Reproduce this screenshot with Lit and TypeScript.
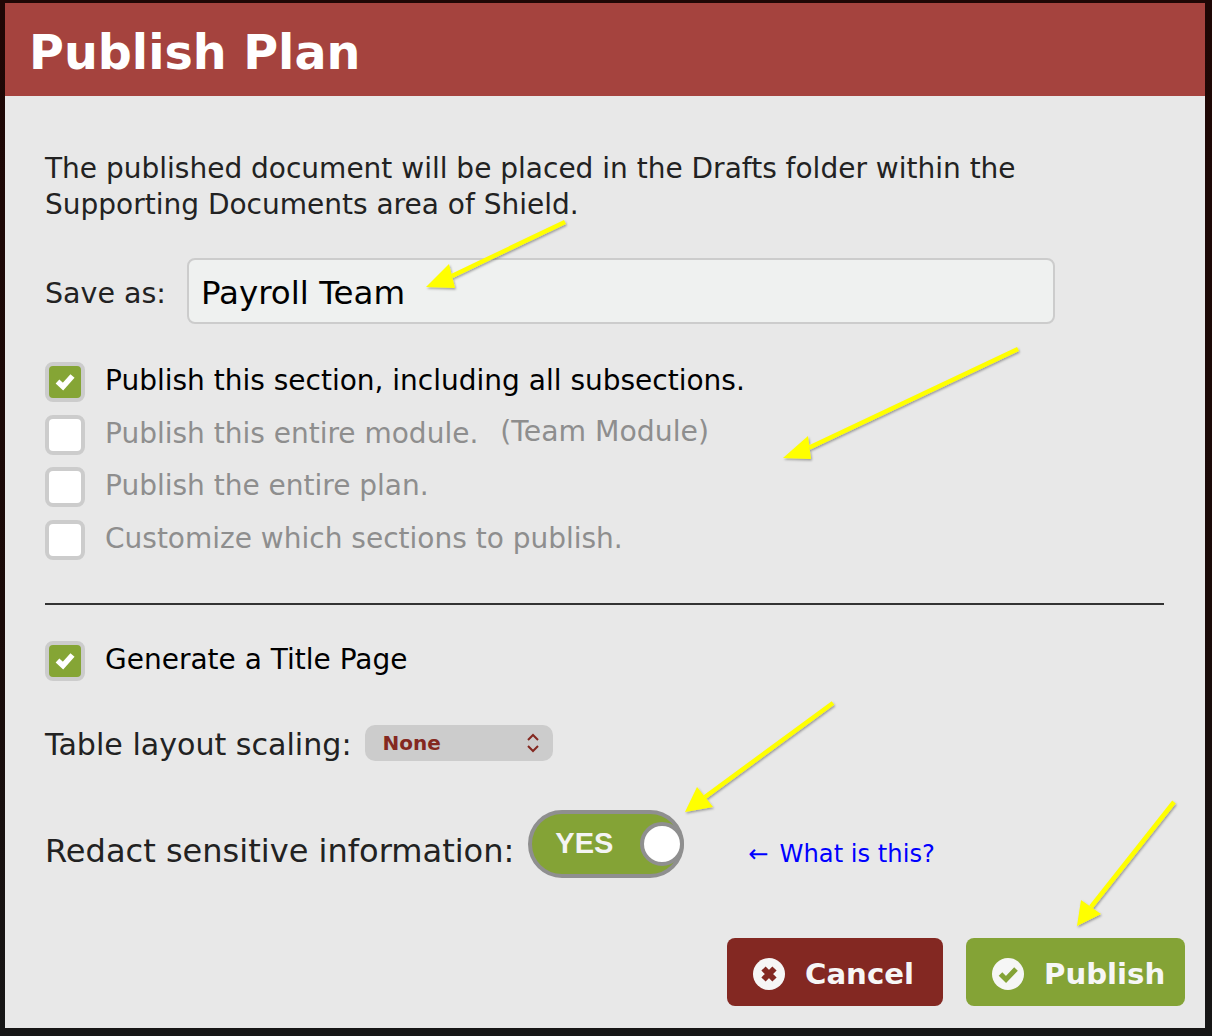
import { LitElement, html, css, svg } from "lit";
import { customElement } from "lit/decorators.js";

const check = html`<svg class="tick" viewBox="0 0 24 24" width="24" height="24"><path d="M4.5 11.5 L10 16.5 L19.5 6" fill="none" stroke="#fff" stroke-width="5.5"/></svg>`;

const arrow = (x1: number, y1: number, tx: number, ty: number, ax: number, ay: number, bx: number, by: number) => svg`
  <g filter="url(#sh)">
    <line x1=${x1} y1=${y1} x2=${(ax + bx) / 2} y2=${(ay + by) / 2} stroke="#ffff00" stroke-width="4.5"/>
    <polygon points="${tx},${ty} ${ax},${ay} ${bx},${by}" fill="#ffff00"/>
  </g>`;

@customElement("app-root")
export class AppRoot extends LitElement {
  static styles = css`
    :host {
      display: block;
      position: relative;
      width: 1212px;
      height: 1036px;
      overflow: hidden;
      background: linear-gradient(#1f0705 0, #1a0a08 60%, #161616 100%);
      font-family: "DejaVu Sans", Verdana, sans-serif;
      color: #222;
    }
    .dialog {
      margin: 3px 7px 0 5px;
      height: 1025px;
      background: #e8e8e8;
      display: flex;
      flex-direction: column;
    }
    .head {
      height: 93px;
      background: #a5433e;
      color: #fff;
      font-weight: 700;
      font-size: 47.6px;
      line-height: 100px;
      padding-left: 24px;
      box-sizing: border-box;
    }
    .body {
      padding: 55px 20px 0 40px;
      display: flex;
      flex-direction: column;
    }
    .intro {
      margin: 0;
      font-size: 28px;
      line-height: 36px;
      color: #222;
    }
    .save {
      display: flex;
      align-items: center;
      gap: 21px;
      margin-top: 35px;
      font-size: 28.5px;
    }
    .save span { margin-top: 4px; }
    .field {
      width: 868px;
      height: 66px;
      box-sizing: border-box;
      border: 2px solid #ccc;
      border-radius: 8px;
      background: #eff1f0;
      padding-left: 12px;
      font-size: 32.5px;
      line-height: 66px;
      color: #000;
    }
    .opts {
      margin-top: 38px;
      display: flex;
      flex-direction: column;
      gap: 12.7px;
    }
    .row {
      display: flex;
      align-items: center;
      gap: 20px;
      height: 40px;
      font-size: 28px;
      color: #8e8e8e;
    }
    .row.on { color: #000; }
    .row .label { margin-bottom: 3px; }
    .row .extra { margin: 0 0 7px 2px; font-size: 28.3px; }
    .box {
      width: 40px;
      height: 40px;
      box-sizing: border-box;
      border: 4px solid #ccc;
      border-radius: 8px;
      background: #ccc;
      flex: none;
      margin-right: 1px;
    }
    .box i {
      display: flex;
      align-items: center;
      justify-content: center;
      width: 32px;
      height: 32px;
      border-radius: 4px;
      background: #fff;
    }
    .on .box i { background: #85a535; }
    .box + .label { margin-left: -1px; }
    hr {
      margin: 43px 0 0;
      width: 1119px;
      height: 2px;
      border: 0;
      background: #333;
    }
    .title { margin-top: 36px; }
    .scale {
      display: flex;
      align-items: center;
      gap: 13px;
      margin-top: 44px;
      font-size: 30.1px;
      height: 36px;
    }
    .scale > span { margin-top: 2px; }
    .select {
      width: 188px;
      height: 36px;
      box-sizing: border-box;
      background: #ccc;
      border-radius: 10px;
      padding: 0 13px 0 18px;
      display: flex;
      align-items: center;
      justify-content: space-between;
      color: #842820;
      font-size: 20px;
      font-weight: 700;
    }
    .redact {
      display: flex;
      align-items: center;
      margin-top: 49px;
      height: 68px;
      font-size: 32.05px;
    }
    .redact .name { margin-top: 14px; }
    .toggle {
      margin-left: 14px;
      width: 156px;
      height: 68px;
      box-sizing: border-box;
      border: 4px solid #8f8f8f;
      border-radius: 34px;
      background: #84a336;
      position: relative;
      display: flex;
      align-items: center;
      padding-left: 23px;
      color: #f4f4f4;
      font-family: "Liberation Sans", Arial, sans-serif;
      font-weight: 700;
      font-size: 29px;
    }
    .toggle span { margin-bottom: 2px; }
    .knob {
      position: absolute;
      right: -4px;
      top: 8px;
      width: 44px;
      height: 44px;
      box-sizing: border-box;
      border-radius: 50%;
      border: 4px solid #8f8f8f;
      background: #fff;
    }
    .what {
      margin-left: 64px;
      margin-top: 20px;
      color: #0000ff;
      font-size: 24.2px;
      display: flex;
      gap: 11px;
    }
    .actions {
      display: flex;
      justify-content: flex-end;
      gap: 23px;
      margin-top: 60px;
    }
    .btn {
      height: 68px;
      border-radius: 8px;
      color: #f6f6f6;
      font-weight: 700;
      font-size: 29.2px;
      display: flex;
      align-items: center;
      box-sizing: border-box;
      gap: 20px;
      padding-top: 3px;
    }
    .cancel { width: 216px; background: #832822; padding-left: 26px; }
    .publish { width: 219px; background: #84a336; padding-left: 26px; }
    .overlay {
      position: absolute;
      left: 0;
      top: 0;
      pointer-events: none;
    }
  `;

  render() {
    return html`
      <div class="dialog">
        <div class="head">Publish Plan</div>
        <div class="body">
          <p class="intro">The published document will be placed in the Drafts folder within the<br />Supporting Documents area of Shield.</p>
          <div class="save"><span>Save as:</span><div class="field">Payroll Team</div></div>
          <div class="opts">
            <div class="row on"><span class="box"><i>${check}</i></span><span class="label">Publish this section, including all subsections.</span></div>
            <div class="row"><span class="box"><i></i></span><span class="label">Publish this entire module.</span><span class="extra">(Team Module)</span></div>
            <div class="row"><span class="box"><i></i></span><span class="label">Publish the entire plan.</span></div>
            <div class="row"><span class="box"><i></i></span><span class="label">Customize which sections to publish.</span></div>
          </div>
          <hr />
          <div class="row on title"><span class="box"><i>${check}</i></span><span class="label">Generate a Title Page</span></div>
          <div class="scale">
            <span>Table layout scaling:</span>
            <div class="select">None
              <svg width="14" height="20" viewBox="0 0 14 20"><path d="M2 7 L7 2 L12 7 M2 13 L7 18 L12 13" fill="none" stroke="#842820" stroke-width="2"/></svg>
            </div>
          </div>
          <div class="redact">
            <span class="name">Redact sensitive information:</span>
            <div class="toggle"><span>YES</span><div class="knob"></div></div>
            <span class="what"><span>←</span><span>What is this?</span></span>
          </div>
          <div class="actions">
            <div class="btn cancel">
              <svg width="32" height="32" viewBox="0 0 32 32"><circle cx="16" cy="16" r="16" fill="#f6f6f6"/><path d="M10.5 10.5 L21.5 21.5 M21.5 10.5 L10.5 21.5" stroke="#832822" stroke-width="6"/></svg>
              Cancel
            </div>
            <div class="btn publish">
              <svg width="32" height="32" viewBox="0 0 32 32"><circle cx="16" cy="16" r="16" fill="#f6f6f6"/><path d="M8.5 16 L14 21.5 L24 11" fill="none" stroke="#84a336" stroke-width="5"/></svg>
              Publish
            </div>
          </div>
        </div>
      </div>
      <svg class="overlay" width="1212" height="1036" viewBox="0 0 1212 1036">
        <defs><filter id="sh" x="-20%" y="-20%" width="140%" height="140%"><feDropShadow dx="1" dy="1.5" stdDeviation="1.2" flood-color="#000" flood-opacity="0.35"/></filter></defs>
        ${arrow(565, 222, 426, 287, 449, 264, 455, 288)}
        ${arrow(1018, 349, 783, 458, 808, 436, 811, 459)}
        ${arrow(833, 703, 685, 812, 697, 787, 713, 807)}
        ${arrow(1174, 802, 1077, 926, 1081, 900, 1101, 914)}
      </svg>
    `;
  }
}
